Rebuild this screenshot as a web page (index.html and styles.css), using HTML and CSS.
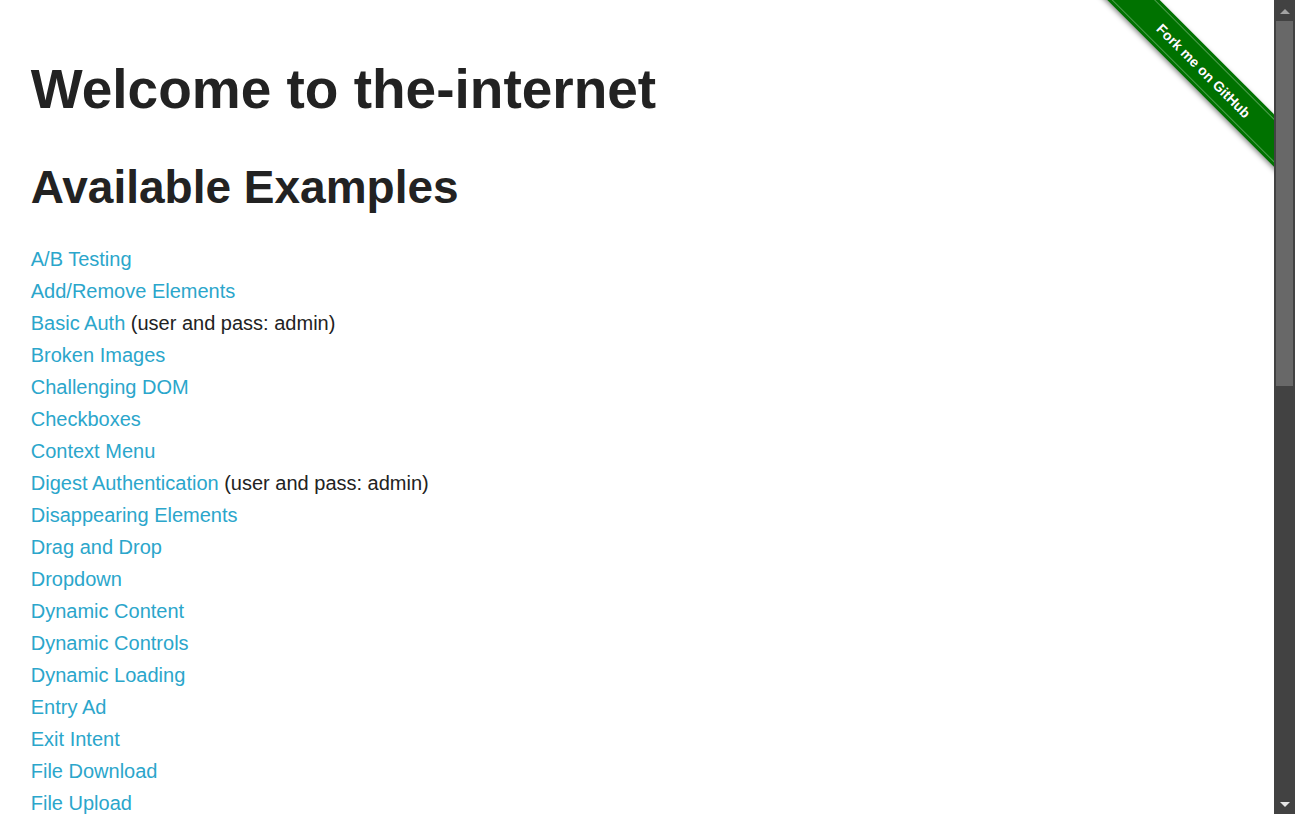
FILE: index.html
```html
<!DOCTYPE html>
<html lang="en">
<head>
<meta charset="utf-8">
<title>The Internet</title>
<link rel="stylesheet" href="styles.css">
</head>
<body>
<div class="page">
  <a class="fork" href="#">
    <span class="fork-band"><span class="fork-stitch">Fork me on GitHub</span></span>
  </a>
  <div class="row">
    <div class="columns">
      <h1 class="heading">Welcome to the-internet</h1>
      <h2>Available Examples</h2>
      <ul class="examples">
        <li><a href="#">A/B Testing</a></li>
        <li><a href="#">Add/Remove Elements</a></li>
        <li><a href="#">Basic Auth</a> (user and pass: admin)</li>
        <li><a href="#">Broken Images</a></li>
        <li><a href="#">Challenging DOM</a></li>
        <li><a href="#">Checkboxes</a></li>
        <li><a href="#">Context Menu</a></li>
        <li><a href="#">Digest Authentication</a> (user and pass: admin)</li>
        <li><a href="#">Disappearing Elements</a></li>
        <li><a href="#">Drag and Drop</a></li>
        <li><a href="#">Dropdown</a></li>
        <li><a href="#">Dynamic Content</a></li>
        <li><a href="#">Dynamic Controls</a></li>
        <li><a href="#">Dynamic Loading</a></li>
        <li><a href="#">Entry Ad</a></li>
        <li><a href="#">Exit Intent</a></li>
        <li><a href="#">File Download</a></li>
        <li><a href="#">File Upload</a></li>
        <li><a href="#">Floating Menu</a></li>
        <li><a href="#">Forgot Password</a></li>
        <li><a href="#">Form Authentication</a></li>
      </ul>
    </div>
  </div>
</div>
<div class="scrollbar">
  <div class="sb-btn sb-up"><span class="arrow-up"></span></div>
  <div class="sb-track"><div class="sb-thumb"></div></div>
  <div class="sb-btn sb-down"><span class="arrow-down"></span></div>
</div>
</body>
</html>
```

FILE: styles.css
```css
html, body {
  height: 100%;
}
body {
  margin: 0;
  display: flex;
  overflow: hidden;
  background: #fff;
  color: #222222;
  font-family: "Liberation Sans", Arial, Helvetica, sans-serif;
  font-size: 20px;
}
.page {
  position: relative;
  flex: 1;
  overflow: hidden;
}
.row {
  max-width: 1250px;
  margin: 0 auto;
}
.columns {
  padding: 0 18.75px;
}
h1, h2 {
  font-weight: bold;
  line-height: 1.2;
  color: #222222;
  margin: 0;
}
h1 {
  font-size: 55px;
  padding-top: 56px;
  margin-bottom: 38px;
}
h2 {
  font-size: 46px;
  margin-bottom: 28px;
}
.examples {
  list-style: none;
  margin: 0;
  padding: 0;
}
.examples li {
  line-height: 32px;
  font-size: 20px;
}
.examples a {
  color: #2ba6cb;
  text-decoration: none;
}

/* GitHub ribbon */
.fork {
  position: absolute;
  top: 0;
  right: 0;
  width: 186px;
  height: 186px;
  overflow: hidden;
  text-decoration: none;
  z-index: 2;
}
.fork-band {
  position: absolute;
  left: 115.5px;
  top: 70.5px;
  width: 320px;
  height: 37px;
  margin-left: -160px;
  margin-top: -18.5px;
  transform: rotate(45deg);
  background: #007200;
  box-shadow: -1px 2px 5px rgba(0, 0, 0, 0.45);
  display: flex;
  align-items: center;
}
.fork-stitch {
  flex: 1;
  height: 31px;
  border-top: 1px solid rgba(255, 255, 255, 0.3);
  border-bottom: 1px solid rgba(255, 255, 255, 0.3);
  box-sizing: border-box;
  display: flex;
  align-items: center;
  justify-content: center;
  color: #fff;
  font-family: "Liberation Sans", Arial, sans-serif;
  font-weight: bold;
  font-size: 14px;
  text-shadow: 0 0 1px rgba(0, 0, 0, 0.4);
}

/* Scrollbar */
.scrollbar {
  width: 21px;
  flex: 0 0 21px;
  background: #424242;
  display: flex;
  flex-direction: column;
}
.sb-btn {
  height: 21px;
  flex: 0 0 21px;
  display: flex;
  align-items: center;
  justify-content: center;
}
.sb-up {
  height: 20px;
  flex-basis: 20px;
}
.arrow-up {
  width: 0;
  height: 0;
  border-left: 5px solid transparent;
  border-right: 5px solid transparent;
  border-bottom: 5px solid #a3a3a3;
  margin-top: 2px;
}
.arrow-down {
  width: 0;
  height: 0;
  border-left: 5px solid transparent;
  border-right: 5px solid transparent;
  border-top: 5px solid #e6e6e6;
  margin-top: 1px;
}
.sb-track {
  flex: 1;
  padding: 1px 2px 0;
}
.sb-thumb {
  height: 365px;
  background: #686868;
}
```
